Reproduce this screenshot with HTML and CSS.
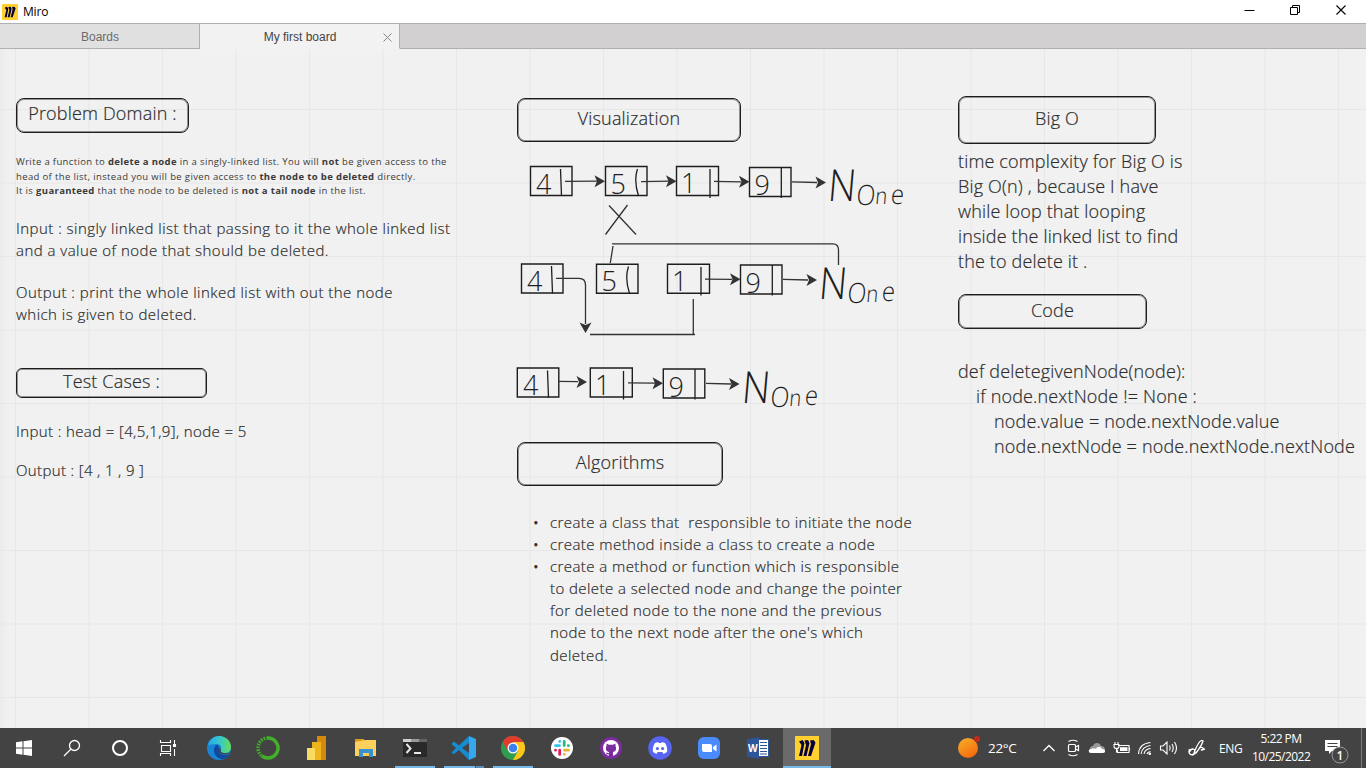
FILE: index.html
```html
<!DOCTYPE html>
<html lang="en">
<head>
<meta charset="utf-8">
<title>Miro</title>
<link rel="stylesheet" href="styles.css">
</head>
<body>
<div class="window">
  <header class="titlebar">
    <svg class="app-icon" width="16" height="16" viewBox="0 0 24 24"><rect width="24" height="24" rx="1" fill="#ffd02f"/><path d="M4 5.500l3.500-1.500 2 3-2.500 13H4l2.500-11zM9.500 4.500l3.500-.5 1.500 3-3 13H8.500l2.500-11zM15 4.500l3.500-.5 2 2.500-4.500 13.500h-3l3-12z" fill="#050038"/></svg>
    <span class="app-name">Miro</span>
    <div class="window-buttons">
      <svg width="46" height="23"><path d="M18.500 10.500h10" stroke="#000"/></svg>
      <svg width="46" height="23"><path d="M18.500 7.500h7v7h-7zM20.500 7v-1.500h7v7h-2" fill="none" stroke="#000"/></svg>
      <svg width="46" height="23"><path d="M18.500 5.500l9 9m0-9l-9 9" stroke="#000" stroke-width="1.100"/></svg>
    </div>
  </header>
  <nav class="tabs">
    <div class="tab">Boards</div>
    <div class="tab tab-active">My first board<svg class="tab-close" width="9" height="9"><path d="M.5.5l8 8m0-8l-8 8" stroke="#888" fill="none"/></svg></div>
    <div class="tabs-rest"></div>
  </nav>
  <main class="board">
    <svg class="grid" width="1366" height="679">
      <defs><pattern id="cells" x="15" y="60" width="73.500" height="73.500" patternUnits="userSpaceOnUse"><path d="M.5 0V73.500M0 .5H73.500" stroke="#e7e7e7" stroke-width="1"/></pattern></defs>
      <rect width="1366" height="679" fill="url(#cells)"/>
    </svg>
    <h2 class="frame f-problem">Problem Domain :</h2>
    <p class="note n-problem">Write a function to <b>delete a node</b> in a singly-linked list. You will <b>not</b> be given access to the<br>head of the list, instead you will be given access to <b>the node to be deleted</b> directly.<br>It is <b>guaranteed</b> that the node to be deleted is <b>not a tail node</b> in the list.</p>
    <p class="body b-input">Input : singly linked list that passing to it the whole linked list<br>and a value of node that should be deleted.</p>
    <p class="body b-output">Output : print the whole linked list with out the node<br>which is given to deleted.</p>
    <h2 class="frame f-test">Test Cases :</h2>
    <p class="body b-tin">Input : head = [4,5,1,9], node = 5</p>
    <p class="body b-tout">Output : [4 , 1 , 9 ]</p>

    <h2 class="frame f-visual">Visualization</h2>
    <svg class="ink" width="420" height="280" viewBox="500 140 420 280">
      <defs><path id="head" d="M0 0L-10.500-6L-8 0L-10.500 6z"/></defs>
      <g class="row">
        <path class="box" d="M530.500 166.500h41.500v29h-41.500zM605.500 166.500h41.500v29h-41.500zM676.500 166.500h42v29h-42zM749.500 167.500h41.500v29h-41.500z"/>
        <path class="bar" d="M560.500 169L561.500 196M637.500 169Q633.500 180 638.500 196M710 169V198M781.300 168V198"/>
        <text x="536" y="193.500">4</text><text x="610.500" y="193.500">5</text><text x="681" y="193">1</text><text x="754.500" y="195">9</text>
        <path class="wire" d="M565 181.300L597 181.200M641 181.600L669 181.200M714 181.300L741 181.800M792 181.900L817 182.500"/>
        <use href="#head" x="605" y="181.200"/><use href="#head" x="676.500" y="181.200"/><use href="#head" x="749.500" y="181.800"/><use href="#head" x="826" y="182.500"/>
        <text class="none" transform="translate(827 201) skewX(-5) scale(.88 1)"><tspan font-size="44">N</tspan><tspan x="33" y="4" font-size="28">O</tspan><tspan x="54.500" y="3" font-size="23">n</tspan><tspan x="72" y="2.500" font-size="27">e</tspan></text>
      </g>
      <path class="wire" d="M609 205.500L636 234.500M627.500 205L605.500 234.500"/>
      <g class="row">
        <path class="box" d="M521.500 264h41.500v29h-41.500zM596.500 264.300h41.500v29h-41.500zM667.500 264.300h42v29h-42zM740.500 265h41.500v29h-41.500z"/>
        <path class="bar" d="M551.500 266L552.500 293.500M628.500 266.500Q624.500 278 629.500 293.500M701 267V295.500M772.300 265V295.500"/>
        <text x="527" y="291">4</text><text x="601.500" y="291">5</text><text x="672" y="290.500">1</text><text x="745.500" y="292.500">9</text>
        <path class="wire" d="M556 278.400H579Q585.500 278.500 585.500 285V324M590 334.500H695M693.300 299V334M610.300 263L613 246M612 243.800H833Q838.500 243.800 838.500 250V265M705 279.200L732 279.300M783 279.400L808 280"/>
        <use href="#head" x="740.500" y="279.300"/><use href="#head" x="817" y="280"/><use href="#head" transform="translate(585.500 333) rotate(90)"/>
        <text class="none" transform="translate(818 298.500) skewX(-5) scale(.88 1)"><tspan font-size="44">N</tspan><tspan x="33" y="4" font-size="28">O</tspan><tspan x="54.500" y="3" font-size="23">n</tspan><tspan x="72" y="2.500" font-size="27">e</tspan></text>
      </g>
      <g class="row">
        <path class="box" d="M517.300 368h41.500v29h-41.500zM590.300 368h42v29h-42zM663.300 369h41.500v29h-41.500z"/>
        <path class="bar" d="M547.500 370.500L548.500 397.500M623.500 371V399.500M695 369V399.500"/>
        <text x="523" y="395">4</text><text x="595" y="394.500">1</text><text x="668.500" y="396.500">9</text>
        <path class="wire" d="M558 381.300L578 381.700M628 382.800L655 383.200M706 383.400L731 384"/>
        <use href="#head" x="587" y="381.900"/><use href="#head" x="663" y="383.300"/><use href="#head" x="739.500" y="384"/>
        <text class="none" transform="translate(741 402.500) skewX(-5) scale(.88 1)"><tspan font-size="44">N</tspan><tspan x="33" y="4" font-size="28">O</tspan><tspan x="54.500" y="3" font-size="23">n</tspan><tspan x="72" y="2.500" font-size="27">e</tspan></text>
      </g>
    </svg>
    <h2 class="frame f-algo">Algorithms</h2>
    <ul class="body b-algo">
      <li>create a class that&nbsp; responsible to initiate the node</li>
      <li>create method inside a class to create a node</li>
      <li>create a method or function which is responsible<br>to delete a selected node and change the pointer<br>for deleted node to the none and the previous<br>node to the next node after the one's which<br>deleted.</li>
    </ul>

    <h2 class="frame f-bigo">Big O</h2>
    <p class="large l-bigo">time complexity for Big O is<br>Big O(n) , because I have<br>while loop that looping<br>inside the linked list to find<br>the to delete it .</p>
    <h2 class="frame f-code">Code</h2>
    <p class="large l-code">def deletegivenNode(node):<br><span class="in1">if node.nextNode != None :</span><br><span class="in2">node.value = node.nextNode.value</span><br><span class="in2">node.nextNode = node.nextNode.nextNode</span></p>
  </main>
  <footer class="taskbar">
    <div class="launchers">
      <div class="item"><svg width="24" height="24" viewBox="0 0 24 24" fill="#fff"><path d="M4 6.300l6.500-1v6.200H4zM11.500 5.200L20 4v7.500h-8.500zM4 12.500h6.500v6.200l-6.500-1zM11.500 12.500H20V20l-8.500-1.200z"/></svg></div>
      <div class="item"><svg width="24" height="24" viewBox="0 0 24 24" fill="none" stroke="#fff" stroke-width="1.300"><circle cx="14.500" cy="9.500" r="5"/><path d="M11 13L4 20"/></svg></div>
      <div class="item"><svg width="24" height="24" viewBox="0 0 24 24"><circle cx="12" cy="12" r="7" fill="none" stroke="#fff" stroke-width="2"/></svg></div>
      <div class="item"><svg width="24" height="24" viewBox="0 0 24 24" fill="none" stroke="#fff" stroke-width="1.100"><path d="M4.500 4v2.500h10V4M5.500 9.500h9v6h-9zM4.500 20v-2.500h10V20M18.500 4v4M18.500 13v7"/><path fill="#fff" d="M17.500 8.500h2v2h-2z"/></svg></div>
      <div class="item wide"><svg width="24" height="24" viewBox="0 0 24 24"><defs><linearGradient id="eg" x1="0" x2="1"><stop stop-color="#27a6e8"/><stop offset=".5" stop-color="#35c9cf"/><stop offset="1" stop-color="#66dd55"/></linearGradient></defs><circle cx="12" cy="12" r="12" fill="#1784d8"/><path d="M1 9C3 3 7 0 12 0c7 0 12 5 12 11 0 4-3 6-6 6-4 0-5-2-4-4 1-3-1-5-5-5-3 0-6 1-8 1z" fill="url(#eg)"/><path d="M9 9c-5 6 0 14 7 14 3-1 5-2 7-5-6 3-12 0-11-5 0-2 0-4-3-4z" fill="#114a9c"/><path d="M14 13c-1 2 0 4 4 4 2 0 4 0 5-1-2 3-5 3-8 2-3-1-4-4-3-6z" fill="#444"/></svg></div>
      <div class="item wide"><svg width="24" height="24" viewBox="0 0 24 24" fill="none" stroke="#43b02a"><path d="M12 2a10 10 0 1 1-6 18" stroke-width="3.500"/><path d="M12 2a10 10 0 0 0-6 18" stroke-width="3.500" stroke-dasharray="1.600 1.200"/></svg></div>
      <div class="item wide"><svg width="24" height="24" viewBox="0 0 24 24"><path fill="#d58a0c" d="M12 0h9v24h-9z"/><path fill="#eeb41c" d="M7 6h9v18H7z"/><path fill="#f9db62" d="M2 12h8v12H2z"/></svg></div>
      <div class="item wide"><svg width="24" height="24" viewBox="0 0 24 24"><path fill="#df9b15" d="M1 3h9v5H1z"/><path fill="#ffd15c" d="M1 6l10-2h11v16H1z"/><path fill="#3991d0" d="M5 13h14v8h-4v-4H9v4H5z"/></svg></div>
      <div class="item wide run"><svg width="24" height="24" viewBox="0 0 24 24"><path fill="#292929" d="M0 3h24v18H0z"/><path fill="#d0d0d0" d="M0 3h8v3H0z"/><path fill="#999" d="M8 3h8v3H8z"/><path fill="#666" d="M16 3h8v3h-8z"/><path d="M3.500 8l4 4.500-4 4.500M11 17h7" stroke="#e6e6e6" stroke-width="2" fill="none"/></svg></div>
      <div class="item wide run multi"><svg width="24" height="24" viewBox="0 0 24 24"><path fill="#168bd2" d="M17 0L7 9.500 2 5.500 0 7v1.500L4 12l-4 4v1.500L2 18l5-4L17 24z"/><path fill="#444" d="M17 7v10l-7-5z"/><path fill="#35a8ed" d="M17 0l7 3v18l-7 3z"/></svg></div>
      <div class="item wide run"><svg width="24" height="24" viewBox="0 0 24 24"><circle cx="12" cy="12" r="12" fill="#2f9e4c"/><path fill="#e33b2e" d="M1.600 6A12 12 0 0 1 22.400 6H12L7 15z"/><path fill="#fdc419" d="M22.400 6A12 12 0 0 1 12 24l5-9-5-9z"/><circle cx="12" cy="12" r="5.500" fill="#fff"/><circle cx="12" cy="12" r="4.300" fill="#3b82ee"/></svg></div>
      <div class="item wide"><svg width="24" height="24" viewBox="0 0 24 24" fill="none" stroke-width="2.800" stroke-linecap="round"><circle cx="12" cy="12" r="11" fill="#fff"/><path stroke="#36c5f0" d="M9.700 5.500h.1M5.500 9.700h4"/><path stroke="#2eb67d" d="M14.200 5.500v4M18.300 9.700h.1"/><path stroke="#ecb22e" d="M14.500 14.200h4M14.300 18.300h.1"/><path stroke="#e01e5a" d="M9.700 14.200v4.200M5.500 14.200h.1"/></svg></div>
      <div class="item wide"><svg width="24" height="24" viewBox="0 0 24 24"><circle cx="12" cy="12" r="11" fill="#7b2c9e"/><circle cx="12" cy="12" r="8" fill="#fff"/><path fill="#7b2c9e" d="M7.500 7.500l2.500 1.200h4l2.500-1.200v2.500c1.500 3.500 0 5.500-2.500 6V20h-4v-1.500c-2 0-3-1-3-2l3 .7v-1.200c-2.500-.5-4-2.500-2.500-6z"/></svg></div>
      <div class="item wide"><svg width="24" height="24" viewBox="0 0 24 24"><circle cx="12" cy="12" r="11.800" fill="#5865f2"/><path fill="#fff" d="M7 7l3-1 .7 1h2.600l.7-1 3 1c2 3 2.500 6 2 9l-3.500 2-1.200-2h-4.600l-1.200 2L5 16c-.500-3 0-6 2-9z"/><g fill="#5865f2"><circle cx="9.400" cy="12.500" r="1.600"/><circle cx="14.600" cy="12.500" r="1.600"/></g></svg></div>
      <div class="item wide"><svg width="24" height="24" viewBox="0 0 24 24"><rect x="1" y="1" width="22" height="22" rx="6" fill="#4a8cff"/><path fill="#fff" d="M5 8h8q2 0 2 2v6H7q-2 0-2-2zM16 11l3.500-2.500v7L16 13z"/></svg></div>
      <div class="item wide"><svg width="24" height="24" viewBox="0 0 24 24"><path fill="#fff" stroke="#2b579a" d="M12 3.500h10.500v17H12z"/><path d="M14 6.500h7M14 9.500h7M14 12.500h7M14 15.500h7M14 18h7" stroke="#2b579a" stroke-width="1.200"/><path fill="#2b579a" d="M1 3.500L13 1v22L1 20.500z"/><text class="word" x="2" y="16">W</text></svg></div>
      <div class="item wide run current"><svg width="24" height="24" viewBox="0 0 24 24"><rect width="24" height="24" fill="#ffd02f"/><path d="M4 5.500l3.500-1.500 2 3-2.500 13H4l2.500-11zM9.500 4.500l3.500-.5 1.500 3-3 13H8.500l2.500-11zM15 4.500l3.500-.5 2 2.500-4.500 13.500h-3l3-12z" fill="#050038"/></svg></div>
    </div>
    <div class="tray">
      <svg class="weather" width="24" height="24" viewBox="0 0 24 24"><defs><linearGradient id="sun" x2=".6" y2="1"><stop stop-color="#f3b32b"/><stop offset="1" stop-color="#f76b0c"/></linearGradient></defs><circle cx="11" cy="12" r="10" fill="url(#sun)"/><circle cx="20" cy="3" r="3" fill="#c42b1c"/></svg>
      <span class="temp">22°C</span>
      <svg width="24" height="24" viewBox="0 0 24 24"><path d="M6.500 15L12 9.500l5.500 5.500" fill="none" stroke="#fff" stroke-width="1.300"/></svg>
      <svg width="24" height="24" viewBox="0 0 24 24" fill="none" stroke="#fff" stroke-width="1.200"><rect x="7.500" y="8.500" width="7" height="7" rx="1"/><path d="M14.500 11l3-1.500v5l-3-1.500M7.500 5.500q4.500-2.500 9 0M7.500 18.500q4.500 2.500 9 0"/></svg>
      <svg width="24" height="24" viewBox="0 0 24 24"><path fill="#999" d="M5 15c-1-3 1-5 3-5 1-4 7-4 8 0 3 0 4 2 4 4z"/><path fill="#fff" d="M6 17c-3 0-3-4 0-4 2-1 4-1 5 0 1-3 5-3 6 0 4 0 4 4 1 4z"/></svg>
      <svg width="24" height="24" viewBox="0 0 24 24"><path fill="none" stroke="#fff" stroke-width="1.100" d="M9 9.500h11v7H8.500v-3M20.500 11.500v3M6 6v2.500M9 6v2.500M5 8.500h5v2q0 2-2.500 2T5 10.500zM7.500 12v4H9"/><path fill="#fff" d="M11 11.200h7.500v3.800H11z"/></svg>
      <svg width="24" height="24" viewBox="0 0 24 24" fill="none" stroke="#fff" stroke-width="1.100"><path d="M5.500 18Q6 7.500 17.500 6.500M8 18Q9 10.500 17.500 9.500M11 18Q12 13 17.500 12.500M14 18Q14.500 16 17.500 15.500"/><circle cx="16.800" cy="17.800" r="1.300" fill="#fff" stroke="none"/></svg>
      <svg width="24" height="24" viewBox="0 0 24 24" fill="none" stroke="#fff" stroke-width="1.100"><path d="M3.500 10h2.500l4-4v12l-4-4H3.500zM12.500 9.500q1.500 2.500 0 5M15 8q2.500 4 0 8M17.500 6q4 6 0 12"/></svg>
      <svg class="pen" width="24" height="24" viewBox="0 0 24 24" fill="none" stroke="#fff" stroke-width="1.300"><path d="M16.500 4.500c-3 1-5 6-7 11l-1 3 2.500-1.500c3-4 6-8 7-12zM4.500 13c-2 6 3 7 5 4 2-4-3-6-5-1M14 12c5-2 6 3 2 2l4-1"/></svg>
      <span class="lang">ENG</span>
      <div class="clock"><span>5:22 PM</span><span>10/25/2022</span></div>
      <div class="notice"><svg width="30" height="30" viewBox="0 0 30 30"><path fill="#fff" d="M5 6h15v11h-8l-3 3v-3H5z"/><path d="M7.500 9.500h10M7.500 12.500h10" stroke="#444"/><circle cx="20" cy="21" r="8" fill="#444" stroke="#999"/><text x="20" y="25.500" text-anchor="middle">1</text></svg></div>
      <div class="peek"></div>
    </div>
  </footer>
</div>
</body>
</html>
```

FILE: styles.css
```css
* { box-sizing: border-box; }
body { margin: 0; overflow: hidden; font-family: "Open Sans", "Noto Sans", sans-serif; }
.window { width: 1366px; height: 768px; display: flex; flex-direction: column; }
.window svg { display: block; flex: none; }

.titlebar { height: 23px; display: flex; align-items: center; background: #fff; }
.app-icon { margin-left: 2px; }
.app-name { margin-left: 5px; font-size: 12px; line-height: 22px; letter-spacing: -.2px; color: #000; }
.window-buttons { display: flex; margin-left: auto; margin-right: 2px; }

.tabs { height: 26px; display: flex; border-top: 1px solid #b0b0b0; font: 12px/24px "Liberation Sans", sans-serif; }
.tab { width: 200px; text-align: center; background: #e0e0e0; color: #6c6c6c; border-right: 1px solid #b0b0b0; border-bottom: 1px solid #b0b0b0; line-height: 26px; padding-left: 1px; }
.tab-active { position: relative; background: #f2f2f2; border-bottom-color: #f2f2f2; color: #444; }
.tab-close { position: absolute; right: 7px; top: 9px; }
.tabs-rest { flex: 1; background: #d2d0d0; border-bottom: 1px solid #b0b0b0; }

.board { position: relative; height: 679px; overflow: hidden; background: linear-gradient(90deg, #ebebeb, #f1f1f1 8px); color: #3a3a3a; }
.grid, .ink, .frame, .note, .body, .large { position: absolute; margin: 0; white-space: nowrap; }
.grid { left: 0; top: 0; }
.ink { left: 500px; top: 91px; }
.frame, .body, .large { font-weight: 300; color: #2c2c2c; -webkit-text-stroke: .2px #2c2c2c; }
.frame { border: 1px solid #1e1e1e; box-shadow: inset 0 0 0 1px rgba(30, 30, 30, .45); border-radius: 8px; font-size: 18px; letter-spacing: .18px; text-align: center; }
.f-problem { left: 16px; top: 49px; width: 173px; height: 35px; line-height: 29px; }
.f-test { left: 16px; top: 319px; width: 191px; height: 30px; line-height: 25px; border-radius: 6px; }
.f-visual { left: 517px; top: 49px; width: 224px; height: 44px; line-height: 39px; }
.f-algo { left: 517px; top: 393px; width: 206px; height: 44px; line-height: 39px; }
.f-bigo { left: 958px; top: 47px; width: 198px; height: 48px; line-height: 43px; }
.f-code { left: 958px; top: 245px; width: 189px; height: 35px; line-height: 30px; }
.note { left: 16px; top: 106px; font-size: 9.500px; line-height: 14.500px; letter-spacing: .36px; }
.body { font-size: 15px; line-height: 22px; letter-spacing: .47px; }
.b-input { left: 16px; top: 168px; }
.b-output { left: 16px; top: 232px; }
.b-tin { left: 16px; top: 371px; letter-spacing: .39px; }
.b-tout { left: 16px; top: 410px; letter-spacing: .36px; }
.b-algo { left: 550px; top: 462px; padding: 0; line-height: 22.100px; letter-spacing: .43px; list-style: none; }
.b-algo li { position: relative; }
.b-algo li::before { content: "•"; position: absolute; left: -17px; -webkit-text-stroke: .8px #2c2c2c; }
.large { left: 958px; font-size: 18px; line-height: 25px; letter-spacing: .16px; }
.l-bigo { top: 100px; }
.l-code { top: 310px; }
.in1 { padding-left: 18px; }
.in2 { padding-left: 36px; }

.row text { font-size: 27px; font-weight: 300; fill: #1e1e1e; }
.box { fill: none; stroke: #1e1e1e; stroke-width: 1.400; }
.bar { fill: none; stroke: #1e1e1e; stroke-width: 1.300; }
.wire { fill: none; stroke: #333; stroke-width: 1.300; }
.row use { fill: #333; }

.taskbar { height: 40px; display: flex; background: #444343; color: #fff; font-size: 12px; }
.launchers { display: flex; }
.item { width: 48px; height: 40px; display: flex; align-items: center; justify-content: center; }
.item.wide { margin-left: 1px; }
.item.wide:nth-child(5) { margin-left: 3px; }
.run { background: linear-gradient(#76b9ed, #76b9ed) 4px 38px / 40px 2px no-repeat; }
.multi { background: linear-gradient(90deg, #76b9ed 31px, #355f80 31px, #355f80 32px, #5b8db5 32px) 4px 38px / 40px 2px no-repeat; }
.current { background: linear-gradient(#76b9ed, #76b9ed) 0 38px / 48px 2px no-repeat, #6b6a6a; }
.word { font-size: 10px; font-weight: 700; fill: #fff; }
.tray { display: flex; align-items: center; margin-left: auto; }
.temp { width: 49px; margin-left: 7px; font-size: 13.500px; letter-spacing: -.3px; }
.pen { margin-left: 4px; }
.lang { width: 33px; margin-left: 10px; font-size: 12px; letter-spacing: -.4px; }
.clock { width: 58px; display: flex; flex-direction: column; text-align: center; line-height: 18px; letter-spacing: -.55px; }
.notice { margin-left: 10px; width: 41px; padding-top: 2px; }
.notice text { font-size: 12px; font-weight: 600; fill: #fff; }
.peek { width: 5px; height: 40px; border-left: 1px solid #7b7b7b; }
```
